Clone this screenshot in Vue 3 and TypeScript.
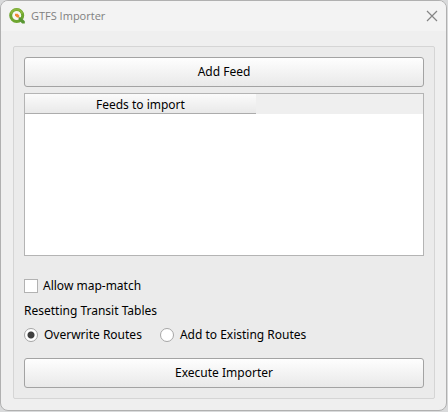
<script setup lang="ts">
import { ref } from 'vue'

type ResetMode = 'overwrite' | 'add'

const allowMapMatch = ref<boolean>(false)
const resetMode = ref<ResetMode>('overwrite')
const modes: { value: ResetMode; label: string }[] = [
  { value: 'overwrite', label: 'Overwrite Routes' },
  { value: 'add', label: 'Add to Existing Routes' },
]
</script>

<template>
  <main class="dialog">
    <header class="titlebar">
      <svg class="logo" viewBox="0 0 16 16" aria-hidden="true">
        <circle cx="7.7" cy="7.5" r="6" fill="#f8f8f4" stroke="#6ea62f" stroke-width="3" />
        <path d="M2 5.6A6 6 0 0 1 13.4 5.6" fill="none" stroke="#8ab63f" stroke-width="2" />
        <path d="M8.2 9.6l1.8-1.8 6 6V16h-1.6z" fill="#f3f3f3" />
        <path d="M9.6 9.2h2.2l4 4v2.4h-2.6l-3.6-3.6z" fill="#589632" />
        <path d="M6 5.8h2.6l1.6 1.6v2H8L6 7.6z" fill="#f08a35" />
      </svg>
      <h1 class="title">GTFS Importer</h1>
      <button class="close" type="button" aria-label="Close">
        <svg viewBox="0 0 12 12" aria-hidden="true">
          <path d="M1 1l10 10M11 1L1 11" fill="none" stroke="#858585" stroke-width="1.2" />
        </svg>
      </button>
    </header>

    <section class="panel">
      <button class="push" type="button">Add Feed</button>

      <div class="feeds">
        <table>
          <thead>
            <tr>
              <th scope="col">Feeds to import</th>
              <td></td>
            </tr>
          </thead>
        </table>
      </div>

      <label class="option check">
        <input v-model="allowMapMatch" type="checkbox" />
        <span>Allow map-match</span>
      </label>

      <fieldset class="reset">
        <legend>Resetting Transit Tables</legend>
        <div class="radios">
          <label v-for="mode in modes" :key="mode.value" class="option radio">
            <input v-model="resetMode" type="radio" name="reset-mode" :value="mode.value" />
            <span>{{ mode.label }}</span>
          </label>
        </div>
      </fieldset>

      <button class="push" type="button">Execute Importer</button>
    </section>
  </main>
</template>

<style>
body {
  background: #d9dadb;
}
</style>

<style scoped>
.dialog {
  box-sizing: border-box;
  display: flex;
  flex-direction: column;
  min-height: calc(100vh - 1px);
  margin-right: 1px;
  border: 1px solid #b0b0b0;
  border-radius: 8px;
  background: #efefef;
  color: #000;
  font: 12px/16px "Noto Sans", sans-serif;
  overflow: hidden;
}
.titlebar {
  display: flex;
  align-items: center;
  height: 30px;
  padding: 0 8px;
  background: #f3f3f3;
}
.logo {
  width: 16px;
  height: 16px;
}
.title {
  flex: 1;
  margin: 0 0 0 6px;
  color: #808080;
  font: 11px/16px "Open Sans", sans-serif;
}
.close {
  display: flex;
  padding: 0;
  border: 0;
  background: none;
}
.close svg {
  width: 12px;
  height: 12px;
}
.panel {
  box-sizing: border-box;
  flex: 1;
  display: flex;
  flex-direction: column;
  margin: 15px 11px 11px 12px;
  padding: 10px;
  border: 1px solid #d5d5d5;
  border-radius: 2px;
  background: #ebebeb;
}
.push {
  height: 30px;
  padding: 0;
  border: 1px solid #a3a3a3;
  border-radius: 3px;
  background: linear-gradient(#fefefe, #e9e9e9);
  color: inherit;
  font: inherit;
}
.feeds {
  flex: 1;
  margin: 6px 0 22px;
  border: 1px solid #b4b4b4;
  background: #fff;
}
table {
  width: 100%;
  border-collapse: collapse;
  table-layout: fixed;
  background: #efefef;
}
th {
  box-sizing: border-box;
  width: 58%;
  height: 19px;
  padding: 3px 0 0;
  border-bottom: 1px solid #acacac;
  background: linear-gradient(#fbfbfb, #e9e9e9);
  font-weight: 400;
  line-height: 16px;
}
td {
  padding: 0;
}
.option {
  display: flex;
  align-items: center;
}
.check {
  gap: 5px;
}
.radio {
  gap: 6px;
}
input {
  appearance: none;
  box-sizing: border-box;
  width: 14px;
  height: 14px;
  margin: 0;
  border: 1px solid #b2b2b2;
  background: #fff;
}
input[type="radio"] {
  border-radius: 50%;
  border-color: #a6a6a6;
}
input[type="radio"]:checked {
  background: radial-gradient(circle, #404040 3px, #fff 4px);
}
input[type="checkbox"]:checked {
  box-shadow: inset 0 0 0 3px #fff;
  background: #404040;
}
.reset {
  min-width: 0;
  margin: 9px 0 15px;
  padding: 0;
  border: 0;
}
legend {
  padding: 0;
}
.radios {
  display: flex;
  gap: 18px;
  margin-top: 8px;
}
</style>
